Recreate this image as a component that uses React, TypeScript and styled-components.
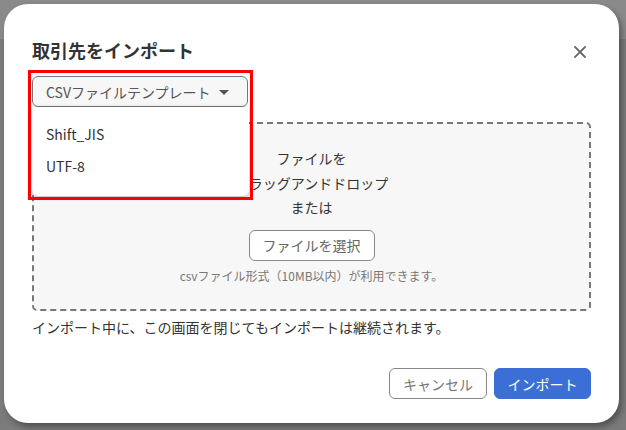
import React from "react";
import styled, { createGlobalStyle } from "styled-components";

const Global = createGlobalStyle`
  html, body { margin: 0; padding: 0; }
  body {
    width: 626px;
    height: 430px;
    overflow: hidden;
    background: #7b7b7b;
    font-family: "Noto Sans CJK JP", "Noto Sans", sans-serif;
    color: #333;
  }
`;

const Page = styled.div`
  position: relative;
  width: 626px;
  height: 430px;
  display: flex;
  flex-direction: column;
`;

const HeaderBand = styled.div`
  height: 39px;
  background: #8a8a8a;
`;

const Modal = styled.div`
  position: absolute;
  left: 4px;
  top: 4px;
  width: 615px;
  height: 419px;
  box-sizing: border-box;
  background: #fff;
  border-radius: 24px;
  box-shadow: 3px 4px 6px rgba(0, 0, 0, 0.35);
  padding: 34px 28px 24px 28px;
  display: flex;
  flex-direction: column;
`;

const HeaderRow = styled.div`
  display: flex;
  align-items: center;
  justify-content: space-between;
  height: 24px;
`;

const Title = styled.h2`
  margin: 0;
  font-size: 18px;
  line-height: 24px;
  font-weight: 700;
  color: #333;
`;

const CloseButton = styled.button`
  border: none;
  background: none;
  padding: 0;
  margin-right: 5px;
  margin-top: 4px;
  width: 12px;
  height: 12px;
  display: flex;
  cursor: pointer;
`;

const SelectWrap = styled.div`
  position: relative;
  margin-top: 14px;
  width: 216px;
  z-index: 2;
`;

const SelectButton = styled.button`
  width: 216px;
  height: 31px;
  box-sizing: border-box;
  border: 1px solid #777;
  border-radius: 6px;
  background: #f7f7f7;
  padding: 0 0 0 13px;
  display: flex;
  align-items: center;
  gap: 8px;
  font-family: inherit;
  font-size: 14px;
  color: #555;
`;

const Caret = styled.span`
  width: 0;
  height: 0;
  border-left: 5px solid transparent;
  border-right: 5px solid transparent;
  border-top: 5px solid #555;
  margin-top: 1px;
`;

const Menu = styled.ul`
  position: absolute;
  left: 0;
  top: 31px;
  width: 217px;
  box-sizing: border-box;
  margin: 0;
  padding: 11px 0 14px;
  list-style: none;
  background: #fff;
  border-radius: 0 0 6px 6px;
  box-shadow: 0 1px 4px rgba(0, 0, 0, 0.3);
`;

const MenuItem = styled.li`
  height: 32px;
  line-height: 32px;
  padding-left: 14px;
  font-size: 14px;
  color: #333;
`;

const Annotation = styled.div`
  position: absolute;
  left: -4px;
  top: -6px;
  width: 225px;
  height: 130px;
  box-sizing: border-box;
  border: 3px solid #ff0000;
  pointer-events: none;
`;

const DropZone = styled.div`
  margin-top: 15px;
  height: 189px;
  box-sizing: border-box;
  border: 2px dashed #777;
  border-radius: 5px;
  background: #f7f7f7;
  padding-top: 22px;
  display: flex;
  flex-direction: column;
  align-items: center;
`;

const DropLine = styled.div`
  font-size: 14px;
  line-height: 24.5px;
  color: #333;
`;

const PickButton = styled.button`
  margin-top: 10px;
  height: 31px;
  padding: 0 13px;
  box-sizing: border-box;
  border: 1px solid #888;
  border-radius: 6px;
  background: #fff;
  font-family: inherit;
  font-size: 14px;
  color: #666;
`;

const Hint = styled.div`
  margin-top: 6px;
  font-size: 12px;
  line-height: 18px;
  color: #777;
`;

const Note = styled.p`
  margin: 6px 0 0;
  font-size: 14px;
  line-height: 20px;
  color: #333;
`;

const Footer = styled.div`
  margin-top: auto;
  display: flex;
  justify-content: flex-end;
  gap: 7px;
`;

const FooterButton = styled.button<{ $primary?: boolean }>`
  height: 31px;
  width: ${(p) => (p.$primary ? "97px" : "98px")};
  box-sizing: border-box;
  border-radius: 6px;
  border: 1px solid ${(p) => (p.$primary ? "#3b6fd5" : "#888")};
  background: ${(p) => (p.$primary ? "#3b6fd5" : "#fff")};
  color: ${(p) => (p.$primary ? "#fff" : "#777")};
  font-family: inherit;
  font-size: 14px;
  padding: 0;
`;

export default function App() {
  return (
    <>
      <Global />
      <Page>
        <HeaderBand />
        <Modal>
          <HeaderRow>
            <Title>取引先をインポート</Title>
            <CloseButton aria-label="閉じる">
              <svg width="12" height="12" viewBox="0 0 12 12">
                <path d="M1 1L11 11M11 1L1 11" stroke="#666" strokeWidth="1.8" strokeLinecap="square" />
              </svg>
            </CloseButton>
          </HeaderRow>
          <SelectWrap>
            <SelectButton>
              CSVファイルテンプレート
              <Caret />
            </SelectButton>
            <Menu>
              <MenuItem>Shift_JIS</MenuItem>
              <MenuItem>UTF-8</MenuItem>
            </Menu>
            <Annotation />
          </SelectWrap>
          <DropZone>
            <DropLine>ファイルを</DropLine>
            <DropLine>ドラッグアンドドロップ</DropLine>
            <DropLine>または</DropLine>
            <PickButton>ファイルを選択</PickButton>
            <Hint>csvファイル形式（10MB以内）が利用できます。</Hint>
          </DropZone>
          <Note>インポート中に、この画面を閉じてもインポートは継続されます。</Note>
          <Footer>
            <FooterButton>キャンセル</FooterButton>
            <FooterButton $primary>インポート</FooterButton>
          </Footer>
        </Modal>
      </Page>
    </>
  );
}
